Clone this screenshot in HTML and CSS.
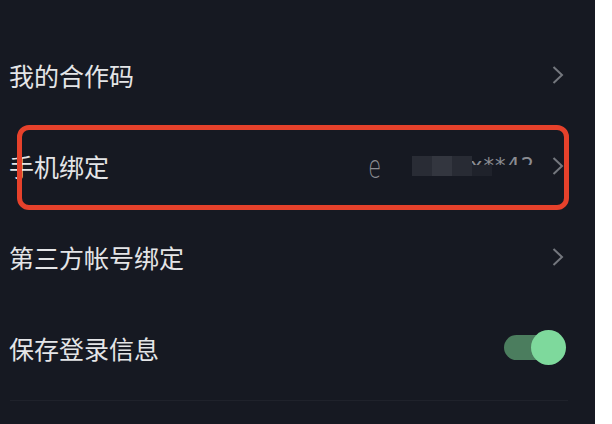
FILE: index.html
```html
<!DOCTYPE html>
<html lang="zh-CN">
<head>
<meta charset="utf-8">
<link rel="stylesheet" href="styles.css">
</head>
<body>
<div class="screen">
  <div class="list">
    <div class="row">
      <span class="label">我的合作码</span>
      <svg class="chev" width="12" height="18" viewBox="0 0 12 18"><polyline points="1.5,1 10,9 1.5,17" fill="none" stroke="#74777e" stroke-width="2"/></svg>
    </div>
    <div class="row">
      <span class="label">手机绑定</span>
      <div class="value">
        <span class="v-e">e</span>
        <div class="mosaic">
          <span class="masked">x**42</span>
          <span class="m m1"></span><span class="m m2"></span><span class="m m3"></span><span class="m m4"></span>
          <span class="cover"></span>
        </div>
      </div>
      <svg class="chev" width="12" height="18" viewBox="0 0 12 18"><polyline points="1.5,1 10,9 1.5,17" fill="none" stroke="#74777e" stroke-width="2"/></svg>
    </div>
    <div class="row">
      <span class="label">第三方帐号绑定</span>
      <svg class="chev" width="12" height="18" viewBox="0 0 12 18"><polyline points="1.5,1 10,9 1.5,17" fill="none" stroke="#74777e" stroke-width="2"/></svg>
    </div>
    <div class="row">
      <span class="label">保存登录信息</span>
      <div class="toggle"><span class="knob"></span></div>
    </div>
  </div>
  <div class="divider"></div>
  <div class="highlight"></div>
</div>
</body>
</html>
```
FILE: styles.css
```css
html, body {
  margin: 0;
  padding: 0;
  background: #ffffff;
}
.screen {
  position: relative;
  width: 595px;
  height: 424px;
  background: #161922;
  overflow: hidden;
  font-family: "Noto Sans CJK SC", "Noto Sans", sans-serif;
}
.list {
  padding-top: 29px;
  display: flex;
  flex-direction: column;
}
.row {
  height: 91px;
  display: flex;
  align-items: center;
  padding: 0 31px 0 9px;
}
.label {
  flex: 1;
  color: #e4e5e7;
  font-size: 25px;
  line-height: 30px;
}
.chev {
  display: block;
}
.value {
  display: flex;
  align-items: center;
  margin-right: 19px;
  height: 22px;
}
.v-e {
  display: inline-block;
  color: #8a8c92;
  font-family: "DejaVu Sans", sans-serif;
  font-weight: 200;
  font-size: 22px;
  line-height: 22px;
  margin-right: 30px;
  transform: scale(0.95, 1.45);
  position: relative;
  top: 2px;
}
.mosaic {
  position: relative;
  display: flex;
  align-items: flex-start;
  width: 121px;
  height: 20px;
}
.m {
  position: relative;
  width: 20px;
  height: 20px;
}
.m1 { background: #292c35; }
.m2 { background: #33363f; }
.m3 { background: #282b34; }
.m4 { background: #1f222b; margin-top: 9px; height: 11px; z-index: 1; }
.masked {
  position: absolute;
  left: 58px;
  top: -2px;
  color: #8a8c92;
  font-family: "DejaVu Sans", sans-serif;
  font-size: 21px;
  line-height: 24px;
  letter-spacing: 1px;
  white-space: nowrap;
}
.cover {
  position: absolute;
  left: 60px;
  top: 9px;
  width: 64px;
  height: 16px;
  background: #161922;
}
.toggle {
  position: relative;
  width: 46px;
  height: 25px;
  margin-right: 14px;
  border-radius: 13px;
  background: #4b7d5e;
}
.knob {
  position: absolute;
  left: 27px;
  top: -5px;
  width: 35px;
  height: 35px;
  border-radius: 50%;
  background: #7ed99c;
}
.divider {
  margin: 7px 27px 0 10px;
  height: 1px;
  background: #1f222b;
}
.highlight {
  position: absolute;
  left: 17px;
  top: 125px;
  width: 542px;
  height: 75px;
  border: 5px solid #e6412b;
  border-radius: 12px;
}
```
